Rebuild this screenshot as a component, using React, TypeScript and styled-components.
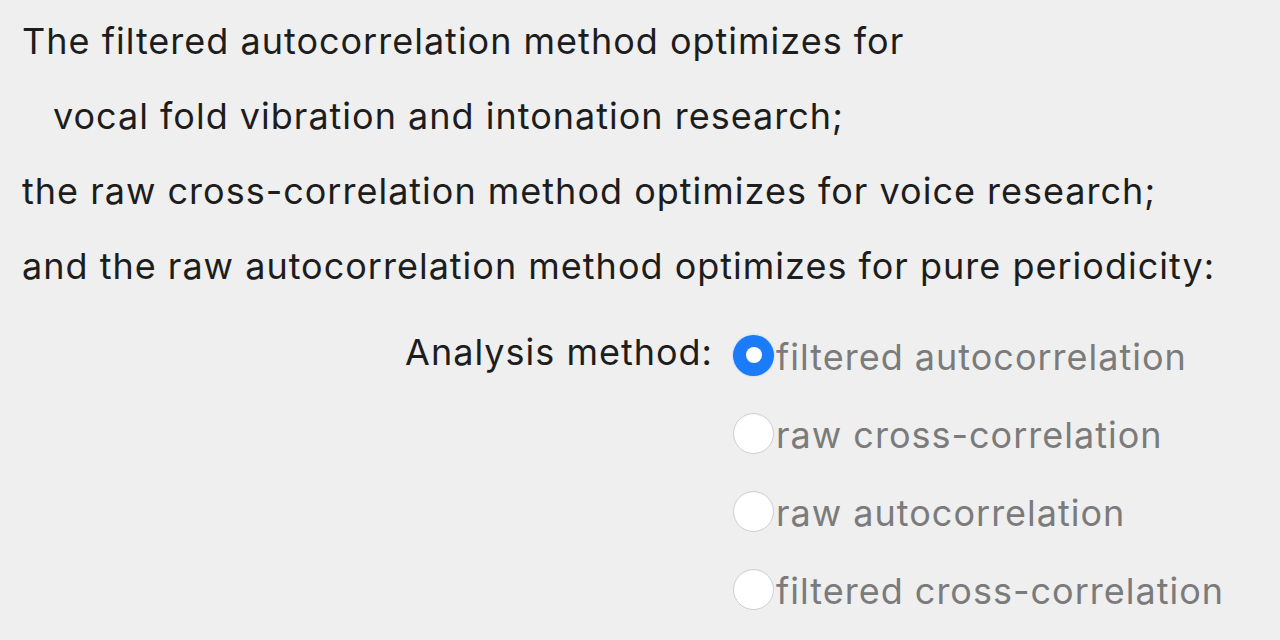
import styled, { createGlobalStyle } from "styled-components";

const GlobalStyle = createGlobalStyle`
  html, body {
    margin: 0;
    padding: 0;
    background: #efefef;
  }
  body {
    font-family: Inter, "Noto Sans", sans-serif;
    -webkit-font-smoothing: antialiased;
  }
`;

const Page = styled.div`
  width: 1280px;
  height: 640px;
  overflow: hidden;
  background: #efefef;
  padding: 4px 0 0 22px;
  box-sizing: border-box;
`;

const Line = styled.div<{ $indent?: boolean }>`
  font-size: 36px;
  letter-spacing: 1px;
  line-height: 75px;
  height: 75px;
  color: #1d1d1d;
  padding-left: ${(p) => (p.$indent ? "31px" : "0")};
  white-space: nowrap;
`;

const Form = styled.div`
  display: grid;
  grid-template-columns: 691px auto;
  column-gap: 20px;
  margin-top: 14px;
`;

const FieldLabel = styled.div`
  font-size: 36px;
  letter-spacing: 1px;
  line-height: 68px;
  color: #1d1d1d;
  text-align: right;
  white-space: nowrap;
`;

const Options = styled.div`
  display: flex;
  flex-direction: column;
`;

const Option = styled.label`
  display: flex;
  align-items: center;
  height: 78px;
  font-size: 36px;
  letter-spacing: 1px;
  line-height: 78px;
  color: #7b7b7b;
  white-space: nowrap;
`;

const Radio = styled.span<{ $checked?: boolean }>`
  flex: none;
  width: 41px;
  height: 41px;
  margin: 0 2px 4px 0;
  border-radius: 50%;
  box-sizing: border-box;
  display: flex;
  align-items: center;
  justify-content: center;
  background: ${(p) => (p.$checked ? "#1a7cf9" : "#ffffff")};
  border: ${(p) => (p.$checked ? "none" : "1.5px solid #cfcfcf")};
  box-shadow: ${(p) =>
    p.$checked
      ? "0 0 2px rgba(26,124,249,0.35)"
      : "inset 0 1px 1px rgba(0,0,0,0.04)"};

  &::after {
    content: "";
    display: ${(p) => (p.$checked ? "block" : "none")};
    width: 16px;
    height: 16px;
    border-radius: 50%;
    background: #ffffff;
  }
`;

const options = [
  "filtered autocorrelation",
  "raw cross-correlation",
  "raw autocorrelation",
  "filtered cross-correlation",
];

export default function App() {
  const selected = 0;
  return (
    <>
      <GlobalStyle />
      <Page>
        <Line>The filtered autocorrelation method optimizes for</Line>
        <Line $indent>vocal fold vibration and intonation research;</Line>
        <Line>the raw cross-correlation method optimizes for voice research;</Line>
        <Line>and the raw autocorrelation method optimizes for pure periodicity:</Line>
        <Form>
          <FieldLabel>Analysis method:</FieldLabel>
          <Options>
            {options.map((o, i) => (
              <Option key={o}>
                <Radio $checked={i === selected} />
                {o}
              </Option>
            ))}
          </Options>
        </Form>
      </Page>
    </>
  );
}
